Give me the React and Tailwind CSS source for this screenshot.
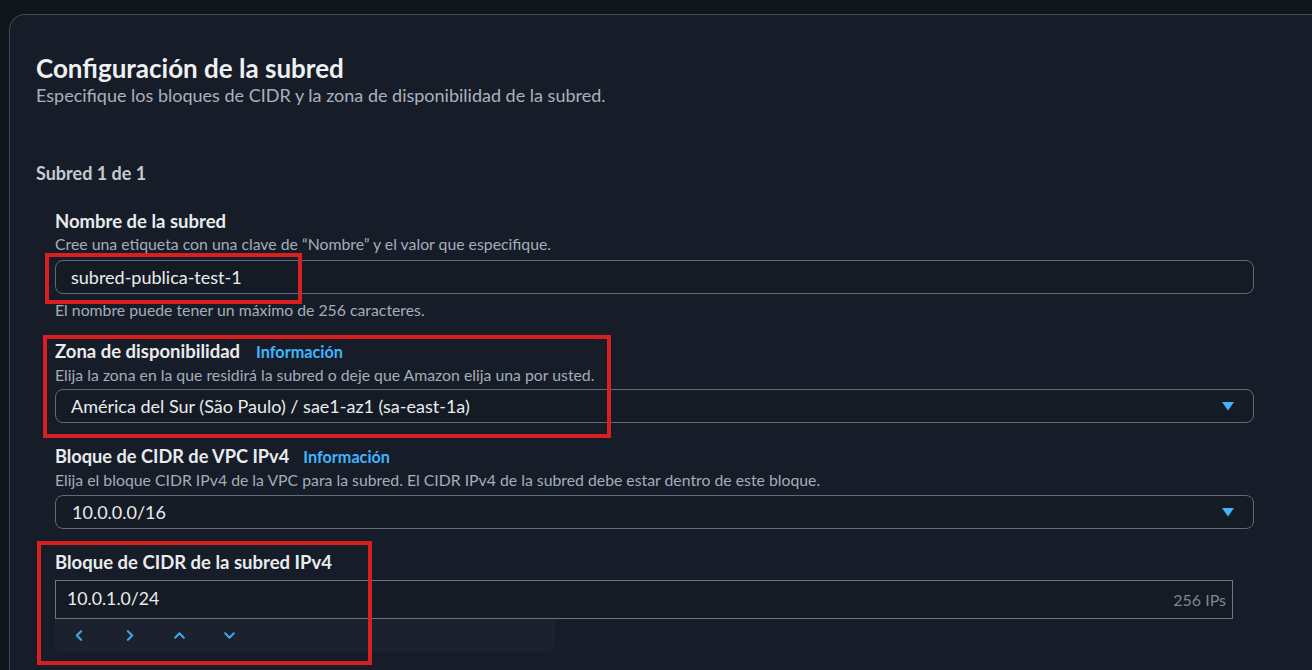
export default function App() {
  const font = { fontFamily: 'Lato, "Noto Sans", sans-serif' };
  const Tri = () => (
    <svg width="14" height="10" viewBox="0 0 14 10" className="shrink-0">
      <polygon points="1,1 13,1 7,9.5" fill="#42b4ff" />
    </svg>
  );
  const Chev = ({ d }) => (
    <svg width="13" height="13" viewBox="0 0 12 12" fill="none" stroke="#3fa7ec" strokeWidth="1.9" strokeLinecap="round" strokeLinejoin="round">
      <path d={d} />
    </svg>
  );
  return (
    <div className="relative w-[1312px] h-[670px] overflow-hidden bg-[#11161d] pl-[9px] pt-[14px]" style={font}>
      <div className="w-[1330px] h-[700px] bg-[#161d28] border-l border-t border-[#434852] rounded-tl-2xl pl-[26px] pt-[38px]">
        <h2 className="text-[26px] leading-[30px] font-bold text-[#eef0f2]">Configuración de la subred</h2>
        <p className="text-[18px] leading-[24px] text-[#aab2bd]">Especifique los bloques de CIDR y la zona de disponibilidad de la subred.</p>
        <div className="mt-[54px] text-[18px] leading-[24px] font-bold text-[#c6cad1]">Subred 1 de 1</div>
        <div className="pl-[19px] w-[1218px]">
          {/* Nombre */}
          <div className="mt-[24px] text-[18.5px] leading-[24px] font-bold text-[#e9ebed]">Nombre de la subred</div>
          <div className="text-[15.8px] leading-[22px] text-[#a4adb8]">Cree una etiqueta con una clave de “Nombre” y el valor que especifique.</div>
          <div className="mt-[5px] h-[34px] rounded-lg border border-[#5f6b7a] bg-[#141b25] flex items-center px-[15px] text-[18px] text-[#e9ebed]">subred-publica-test-1</div>
          <div className="text-[15.8px] leading-[22px] text-[#a4adb8] mt-[5px]">El nombre puede tener un máximo de 256 caracteres.</div>

          {/* Zona */}
          <div className="mt-[18px] flex items-baseline gap-[16px] leading-[24px]">
            <span className="text-[18.5px] font-bold text-[#e9ebed]">Zona de disponibilidad</span>
            <span className="text-[16.2px] font-bold text-[#42b4ff]">Información</span>
          </div>
          <div className="text-[15.8px] leading-[22px] text-[#a4adb8]">Elija la zona en la que residirá la subred o deje que Amazon elija una por usted.</div>
          <div className="mt-[3px] h-[34px] rounded-lg border border-[#5f6b7a] bg-[#141b25] flex items-center justify-between pl-[15px] pr-[18px] text-[18px] text-[#e9ebed]">
            <span>América del Sur (São Paulo) / sae1-az1 (sa-east-1a)</span>
            <Tri />
          </div>

          {/* VPC */}
          <div className="mt-[21px] flex items-baseline gap-[14px] leading-[24px]">
            <span className="text-[18.2px] font-bold text-[#e9ebed]">Bloque de CIDR de VPC IPv4</span>
            <span className="text-[16.2px] font-bold text-[#42b4ff]">Información</span>
          </div>
          <div className="text-[15.8px] leading-[22px] text-[#a4adb8]">Elija el bloque CIDR IPv4 de la VPC para la subred. El CIDR IPv4 de la subred debe estar dentro de este bloque.</div>
          <div className="mt-[4px] h-[34px] rounded-lg border border-[#5f6b7a] bg-[#141b25] flex items-center justify-between pl-[16px] pr-[18px] text-[18px] text-[#e9ebed]">
            <span>10.0.0.0/16</span>
            <Tri />
          </div>

          {/* Subred IPv4 */}
          <div className="mt-[21px] text-[18.5px] leading-[24px] font-bold text-[#e9ebed]">Bloque de CIDR de la subred IPv4</div>
          <div className="mt-[6px] w-[1178px] h-[39px] border border-[#6b7584] bg-[#141b25] flex items-center justify-between pl-[11px] pr-[6px]">
            <span className="text-[17.7px] text-[#e9ebed]">10.0.1.0/24</span>
            <span className="text-[16px] text-[#7d8794]">256 IPs</span>
          </div>
          <div className="w-[500px] h-[33px] bg-[#1b222d] rounded-b-md flex items-center pl-[18px] gap-[37px]">
            <Chev d="M7.5 2 L3.5 6 L7.5 10" />
            <Chev d="M4.5 2 L8.5 6 L4.5 10" />
            <Chev d="M2 8 L6 4 L10 8" />
            <Chev d="M2 4 L6 8 L10 4" />
          </div>
        </div>
      </div>

      {/* annotation boxes */}
      <div className="absolute left-[45px] top-[253px] w-[257px] h-[51px] border-4 border-[#d7201f]" />
      <div className="absolute left-[43px] top-[335px] w-[568px] h-[103px] border-4 border-[#d7201f]" />
      <div className="absolute left-[37px] top-[541px] w-[335px] h-[124px] border-4 border-[#d7201f]" />
    </div>
  );
}
